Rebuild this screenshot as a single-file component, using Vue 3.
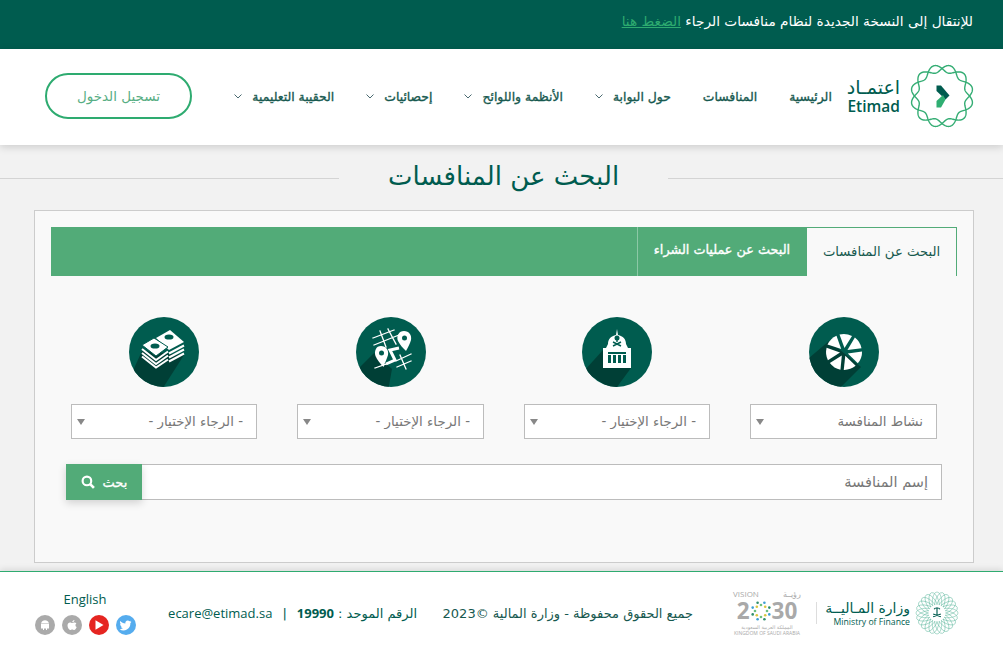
<script setup>
const navItems = [
  { label: 'الرئيسية' },
  { label: 'المنافسات' },
  { label: 'حول البوابة', menu: true },
  { label: 'الأنظمة واللوائح', menu: true },
  { label: 'إحصائيات', menu: true },
  { label: 'الحقيبة التعليمية', menu: true },
];

const filters = [
  { icon: 'wheel', text: 'نشاط المنافسة' },
  { icon: 'gov', text: '- الرجاء الإختيار -' },
  { icon: 'map', text: '- الرجاء الإختيار -' },
  { icon: 'money', text: '- الرجاء الإختيار -' },
];

// two strands that cross each other, this is the etimad ring
function wavePath(cx, cy, r, amp, lobes, phase) {
  let d = '';
  for (let i = 0; i <= 240; i++) {
    const t = (i / 240) * Math.PI * 2;
    const rr = r + amp * Math.sin(lobes * t + phase);
    const x = cx + rr * Math.cos(t);
    const y = cy + rr * Math.sin(t);
    d += (i ? 'L' : 'M') + x.toFixed(2) + ' ' + y.toFixed(2);
  }
  return d + 'Z';
}

const ringA = wavePath(32, 32, 27.5, 3.8, 6, 0);
const ringB = wavePath(32, 32, 27.5, 3.8, 6, Math.PI);
const wedges = [0, 1, 2, 3, 4, 5, 6].map((k) => (k * 360) / 7);
const rosette = Array.from({ length: 24 }, (_, k) => k * 15);

// coloured dots of the vision 2030 emblem
const burstColors = ['#6cc07e', '#3d9fd3', '#d9c83f', '#2f8f6d'];
const burstDots = Array.from({ length: 16 }, (_, k) => {
  const t = (k / 16) * Math.PI * 2;
  const r = k % 2 ? 9 : 6;
  return {
    x: (11 + r * Math.cos(t)).toFixed(1),
    y: (11 + r * Math.sin(t)).toFixed(1),
    color: burstColors[k % 4],
  };
});
</script>

<template>
  <div class="page" dir="rtl">
    <div class="notice">
      للإنتقال إلى النسخة الجديدة لنظام منافسات الرجاء
      <a href="#">الضغط هنا</a>
    </div>

    <header class="header">
      <a class="logo" href="#">
        <svg width="64" height="64" viewBox="0 0 64 64">
          <path :d="ringA" fill="none" stroke="#35ad74" stroke-width="1.4" />
          <path :d="ringB" fill="none" stroke="#35ad74" stroke-width="1.4" />
          <polygon points="26.500,21.500 31,21.500 39.500,31.500 35.500,35.500 26.500,27" fill="#005c4f" />
          <polygon points="26.500,37 33,31 35.500,35.500 31,43.500 26.500,43.500" fill="#2fae72" />
        </svg>
        <span class="logo-text">
          <span class="logo-ar">اعتمـاد</span>
          <span class="logo-en">Etimad</span>
        </span>
      </a>
      <nav class="nav">
        <a v-for="item in navItems" :key="item.label" href="#" class="nav-item">
          {{ item.label }}
          <svg v-if="item.menu" width="8" height="5" viewBox="0 0 8 5">
            <path d="M.5.5 4 4 7.500.5" fill="none" stroke="#4a6a70" stroke-width="1" />
          </svg>
        </a>
      </nav>
      <a href="#" class="login">تسجيل الدخول</a>
    </header>

    <main class="main">
      <div class="title-row">
        <h1>البحث عن المنافسات</h1>
      </div>

      <section class="card">
        <div class="tabs">
          <a href="#" class="tab active">البحث عن المنافسات</a>
          <a href="#" class="tab">البحث عن عمليات الشراء</a>
        </div>

        <div class="filters">
          <div v-for="(f, i) in filters" :key="i" class="filter">
            <svg class="badge" width="70" height="70" viewBox="0 0 70 70">
              <defs>
                <clipPath :id="'disc' + i"><circle cx="35" cy="35" r="35" /></clipPath>
              </defs>
              <circle cx="35" cy="35" r="35" fill="#005c4f" />

              <g v-if="f.icon === 'wheel'">
                <polygon points="20,24 52,50 28,74 -6,46" fill="#003f36" clip-path="url(#disc0)" />
                <path
                  v-for="a in wedges"
                  :key="a"
                  d="M35.500 31 L30.500 17.500 A18 18 0 0 1 43 19 Z"
                  fill="#fff"
                  :transform="'rotate(' + a + ' 35 35)'"
                />
              </g>

              <g v-if="f.icon === 'gov'">
                <polygon points="21,33 49,51 32,74 2,54" fill="#003f36" clip-path="url(#disc1)" />
                <path d="M35 12 36 18 C41 19 44 22 44 27 L46 31 H24 L26 27 C26 22 29 19 34 18Z" fill="#fff" />
                <rect x="21" y="31" width="28" height="20" fill="#fff" />
                <path d="M26 35H44V37H26ZM26 38h3v8h-3ZM31 38h3v8h-3ZM36 38h3v8h-3ZM41 38h3v8h-3Z" fill="#005c4f" />
                <path d="M35 20v5M31 29l8-4M39 29l-8-4" stroke="#005c4f" stroke-width="1.400" fill="none" />
                <circle cx="35" cy="21" r="2.500" fill="#005c4f" />
              </g>

              <g v-if="f.icon === 'map'">
                <polygon points="18,36 36,52 32,74 -2,56" fill="#003f36" clip-path="url(#disc2)" />
                <g stroke="#fff" fill="none" stroke-linecap="square">
                  <path d="M17 21 38 13M18 28 43 18M24 14 30 30M32 12 40 27" stroke-width="1.300" />
                  <path d="M40 44 55 37M41 50 55 44M44 38 50 52M19 51 30 47" stroke-width="1.300" />
                  <path d="M30 47 39 43 34 33 43 31" stroke-width="3" stroke-linecap="butt" />
                </g>
                <path d="M48 14C53 14 56 18 55 23 54 27 52 30 50 34 47 31 44 28 42 24 40 19 43 14 48 14Z" fill="#fff" />
                <circle cx="48.500" cy="21" r="2.500" fill="#005c4f" />
                <path d="M25 29C30 29 33 33 32 38 31 42 29 45 27.500 50 24 46 21 43 19.500 39 18 34 20 29 25 29Z" fill="#fff" />
                <circle cx="25.500" cy="36" r="2.500" fill="#005c4f" />
              </g>

              <g v-if="f.icon === 'money'">
                <polygon points="13,34 55,38 32,74 2,58" fill="#003f36" clip-path="url(#disc3)" />
                <polygon points="41,13 55,25 40,33 27,21" fill="#fff" />
                <path d="M40 36.500 55 28.500M40 40.500 55 32.500M40 44.500 55 36.500" fill="none" stroke="#fff" stroke-width="2" />
                <polygon points="25,21 39,30 27,39 13,28" fill="#fff" stroke="#005c4f" stroke-width="1" />
                <path d="M13 32 27 43 39 34.500M13 36 27 47 39 38.500M13 39.500 27 50.500 39 42.500" fill="none" stroke="#fff" stroke-width="2" />
                <ellipse cx="40" cy="20" rx="4.500" ry="2.600" fill="#005c4f" />
                <ellipse cx="26" cy="29" rx="4.500" ry="2.600" fill="#005c4f" />
              </g>
            </svg>

            <div class="select-wrap">
              <select>
                <option>{{ f.text }}</option>
              </select>
              <span class="caret"></span>
            </div>
          </div>
        </div>

        <form class="search" @submit.prevent>
          <input type="text" placeholder="إسم المنافسة" />
          <button type="submit">
            بحث
            <svg width="14" height="14" viewBox="0 0 13 13">
              <circle cx="5.500" cy="5.500" r="4" fill="none" stroke="#fff" stroke-width="2" />
              <path d="M8.500 8.500 12 12" stroke="#fff" stroke-width="2.500" />
            </svg>
          </button>
        </form>
      </section>
    </main>

    <footer class="footer">
      <div class="mof">
        <svg width="44" height="46" viewBox="0 0 46 46">
          <ellipse
            v-for="a in rosette"
            :key="a"
            cx="23"
            cy="12"
            rx="5"
            ry="11"
            fill="none"
            stroke="#58b59a"
            stroke-width=".5"
            :transform="'rotate(' + a + ' 23 23)'"
          />
          <circle cx="23" cy="23" r="9" fill="#fff" />
          <path d="M23 17v8M19 27l8-3M27 27l-8-3M20 19c1-2 5-2 6 0" fill="none" stroke="#005c4f" stroke-width="1.200" />
        </svg>
        <div class="mof-text">
          <span class="mof-ar">وزارة المـاليــة</span>
          <span class="mof-en">Ministry of Finance</span>
        </div>
      </div>
      <div class="vision">
        <div class="vision-top"><span>رؤيــة</span><span>VISION</span></div>
        <div class="vision-year" dir="ltr">
          2
          <svg width="22" height="22" viewBox="0 0 22 22">
            <circle v-for="(d, k) in burstDots" :key="k" :cx="d.x" :cy="d.y" r="1.300" :fill="d.color" />
          </svg>
          30
        </div>
        <div class="vision-ar">المملكة العربية السعودية</div>
        <div class="vision-en">KINGDOM OF SAUDI ARABIA</div>
      </div>
      <p class="copy">جميع الحقوق محفوظة - وزارة المالية ©2023</p>
      <p class="contact">
        الرقم الموحد : <b>19990</b>
        <span class="sep">|</span>
        <a href="#">ecare@etimad.sa</a>
      </p>
      <div class="side">
        <a href="#" class="lang">English</a>
        <div class="social" dir="ltr">
          <a href="#" class="soc grey">
            <svg width="12" height="12" viewBox="0 0 12 12"><path d="M2 4.500H10V9.500H8V11H7V9.500H5V11H4V9.500H2ZM2.200 4A4 4 0 0 1 9.800 4Z" fill="#fff" /></svg>
          </a>
          <a href="#" class="soc grey">
            <svg width="12" height="12" viewBox="0 0 12 12"><path d="M8.500 1C8.500 2.300 7.500 3.300 6.300 3.200 6.300 2 7.300 1 8.500 1ZM6.200 3.900C7 3.900 7.500 3.400 8.500 3.400 9.300 3.400 10 3.800 10.400 4.500 9 5.300 9.200 7.500 10.700 8.100 10.200 9.500 9.200 11 8.200 11 7.400 11 7.100 10.500 6.200 10.500 5.300 10.500 5 11 4.200 11 3 11 1.500 8.600 1.500 6.500 1.500 4.500 2.800 3.400 4 3.400 5 3.400 5.500 3.900 6.200 3.900Z" fill="#fff" /></svg>
          </a>
          <a href="#" class="soc red">
            <svg width="12" height="12" viewBox="0 0 12 12"><path d="M2.500 1.200 10.500 6 2.500 10.800Z" fill="#fff" /></svg>
          </a>
          <a href="#" class="soc blue">
            <svg width="13" height="13" viewBox="0 0 24 24"><path d="M23 5c-.8.400-1.700.600-2.600.700.900-.600 1.600-1.400 2-2.500-.900.500-1.900.900-2.900 1.100A4.500 4.500 0 0 0 11.800 8.500C8 8.300 4.600 6.500 2.400 3.700c-1.200 2-.600 4.700 1.400 6-.700 0-1.400-.200-2-.600 0 2.200 1.500 4 3.600 4.500-.700.200-1.400.200-2 .100.600 1.800 2.300 3.100 4.200 3.100A9 9 0 0 1 1 18.700 12.800 12.800 0 0 0 21 7.300c.800-.600 1.500-1.400 2-2.300Z" fill="#fff" /></svg>
          </a>
        </div>
      </div>
    </footer>
  </div>
</template>

<style>
html,
body {
  margin: 0;
  background: #f2f2f2;
}
</style>

<style scoped>
.page {
  height: 654px;
  display: flex;
  flex-direction: column;
  overflow: hidden;
  font-family: "DejaVu Sans", sans-serif;
  color: #005c4f;
}

a {
  color: inherit;
  text-decoration: none;
}

.notice {
  height: 49px;
  box-sizing: border-box;
  background: #005c4f;
  color: #fff;
  font-size: 13.700px;
  line-height: 43px;
  padding: 0 30px;
}

.notice a {
  color: #2eab70;
  text-decoration: underline;
}

.header {
  height: 96px;
  flex: none;
  box-sizing: border-box;
  background: #fff;
  display: flex;
  align-items: center;
  padding: 0 29px 2px 45px;
  box-shadow: 0 2px 8px rgba(0, 0, 0, 0.16);
  position: relative;
}

.logo {
  display: flex;
  align-items: center;
  gap: 10px;
}

.logo-text {
  display: flex;
  flex-direction: column;
  align-items: flex-start;
  line-height: 1;
}

.logo-ar {
  font-size: 19px;
  height: 19px;
  line-height: 19px;
}

.logo-en {
  font-family: "Open Sans", sans-serif;
  font-size: 15.500px;
  font-weight: 600;
  line-height: 17px;
  margin-top: 1px;
}

.nav {
  display: flex;
  align-items: center;
  gap: 32px;
  margin-right: 15px;
}

.nav-item {
  display: flex;
  align-items: center;
  gap: 10px;
  white-space: nowrap;
  font-size: 12.400px;
  -webkit-text-stroke: 0.35px #17594f;
  color: #17594f;
}

.login {
  margin-right: auto;
  width: 147px;
  height: 46px;
  box-sizing: border-box;
  border: 2px solid #2eab70;
  border-radius: 23px;
  color: #58ae84;
  font-size: 13.500px;
  line-height: 42px;
  text-align: center;
}

.main {
  flex: 1;
  min-height: 0;
}

.title-row {
  height: 65px;
  display: flex;
  align-items: center;
  gap: 49px;
}

.title-row::before,
.title-row::after {
  content: "";
  flex: 1;
  height: 1px;
  background: #d4d4d4;
  margin-top: 1px;
}

.title-row::after {
  flex: none;
  width: 339px;
}

h1 {
  margin: 0 0 4px;
  font-size: 26px;
  font-weight: 400;
  color: #005c4f;
}

.card {
  margin: 0 29px 0 34px;
  height: 353px;
  box-sizing: border-box;
  background: #f9f9f9;
  border: 1px solid #ccc;
  padding: 16px 16px 0;
}

.tabs {
  height: 49px;
  display: flex;
  background: #52ab78;
}

.tab {
  width: 169px;
  box-sizing: border-box;
  border-left: 1px solid #8cc8a6;
  text-align: center;
  color: #fff;
  font-size: 12.800px;
  -webkit-text-stroke: 0.35px #fff;
  line-height: 46px;
}

.tab.active {
  width: 151px;
  background: #f9f9f9;
  border: 1px solid #52ab78;
  border-bottom: none;
  color: #17594f;
  font-size: 13.200px;
  -webkit-text-stroke: 0;
  line-height: 48px;
}

.filters {
  display: grid;
  grid-template-columns: 187px 186px 187px 186px;
  gap: 40px;
  margin: 41px 20px 0;
}

.filter {
  display: flex;
  flex-direction: column;
  align-items: center;
  gap: 17px;
}

.badge {
  display: block;
}

.select-wrap {
  position: relative;
  width: 100%;
}

select {
  display: block;
  width: 100%;
  height: 35px;
  box-sizing: border-box;
  background: #fff;
  border: 1px solid #bcbcbc;
  border-radius: 0;
  appearance: none;
  padding: 0 13px;
  font: inherit;
  font-size: 13.400px;
  color: #777;
}

.caret {
  position: absolute;
  left: 6px;
  top: 15px;
  border: 4px solid transparent;
  border-top: 6px solid #888;
  border-bottom: none;
}

.search {
  display: flex;
  height: 36px;
  margin: 25px 15px 0;
}

.search input {
  flex: 1;
  min-width: 0;
  box-sizing: border-box;
  background: #fff;
  border: 1px solid #bcbcbc;
  border-left: none;
  border-radius: 0;
  padding: 0 13px;
  font: inherit;
  font-size: 14.500px;
  outline: none;
}

.search input::placeholder {
  color: #777;
  opacity: 1;
}

.search button {
  width: 76px;
  border: none;
  background: #52ab78;
  color: #fff;
  display: flex;
  align-items: center;
  justify-content: center;
  gap: 8px;
  font: inherit;
  font-size: 13px;
  -webkit-text-stroke: 0.3px #fff;
  box-shadow: 0 3px 8px rgba(0, 0, 0, 0.16);
}

.footer {
  height: 83px;
  flex: none;
  box-sizing: border-box;
  background: #fff;
  border-top: 1px solid #2eab70;
  box-shadow: 0 -2px 6px rgba(0, 0, 0, 0.1);
  display: flex;
  align-items: center;
  padding: 0 44px 0 34px;
  font-size: 13px;
}

.mof {
  display: flex;
  align-items: center;
  gap: 5px;
  padding-left: 17px;
  border-left: 1px solid #ddd;
  height: 22px;
}

.mof-text {
  width: 76px;
  display: flex;
  flex-direction: column;
  align-items: flex-start;
  white-space: nowrap;
}

.mof-ar {
  font-size: 14px;
  line-height: 18px;
}

.mof-en {
  font-family: "Open Sans", sans-serif;
  font-size: 8.700px;
  line-height: 11px;
}

.vision {
  margin-right: 15px;
  width: 68px;
  color: #a9a9a9;
  text-align: center;
  line-height: 1.100;
}

.vision-top {
  display: flex;
  justify-content: space-between;
  font-family: "Open Sans", sans-serif;
  font-size: 8px;
}

.vision-year {
  font-family: "Open Sans", sans-serif;
  font-weight: 700;
  font-size: 22.500px;
  line-height: 24px;
  display: flex;
  justify-content: center;
  align-items: center;
  height: 24px;
}

.vision-ar {
  font-size: 5px;
  line-height: 6px;
  margin-top: 1px;
}

.vision-en {
  font-family: "Open Sans", sans-serif;
  font-size: 5px;
  line-height: 6px;
  white-space: nowrap;
}

p {
  margin: 0;
}

.copy {
  margin-right: 40px;
  width: 250px;
  white-space: nowrap;
  color: #17594f;
}

.contact {
  margin-right: 26px;
  width: 250px;
  white-space: nowrap;
}

.contact a,
.contact b {
  font-family: "Open Sans", sans-serif;
}

.sep {
  margin: 0 10px;
}

.side {
  margin-right: auto;
  width: 102px;
  display: flex;
  flex-direction: column;
  align-items: center;
  gap: 8px;
}

.lang {
  font-family: "Open Sans", sans-serif;
  font-size: 13px;
  line-height: 16px;
}

.social {
  display: flex;
  gap: 7px;
}

.soc {
  width: 20px;
  height: 20px;
  border-radius: 50%;
  display: flex;
  align-items: center;
  justify-content: center;
}

.grey {
  background: #aaa;
}

.red {
  background: #e52521;
}

.blue {
  background: #55acee;
}
</style>
